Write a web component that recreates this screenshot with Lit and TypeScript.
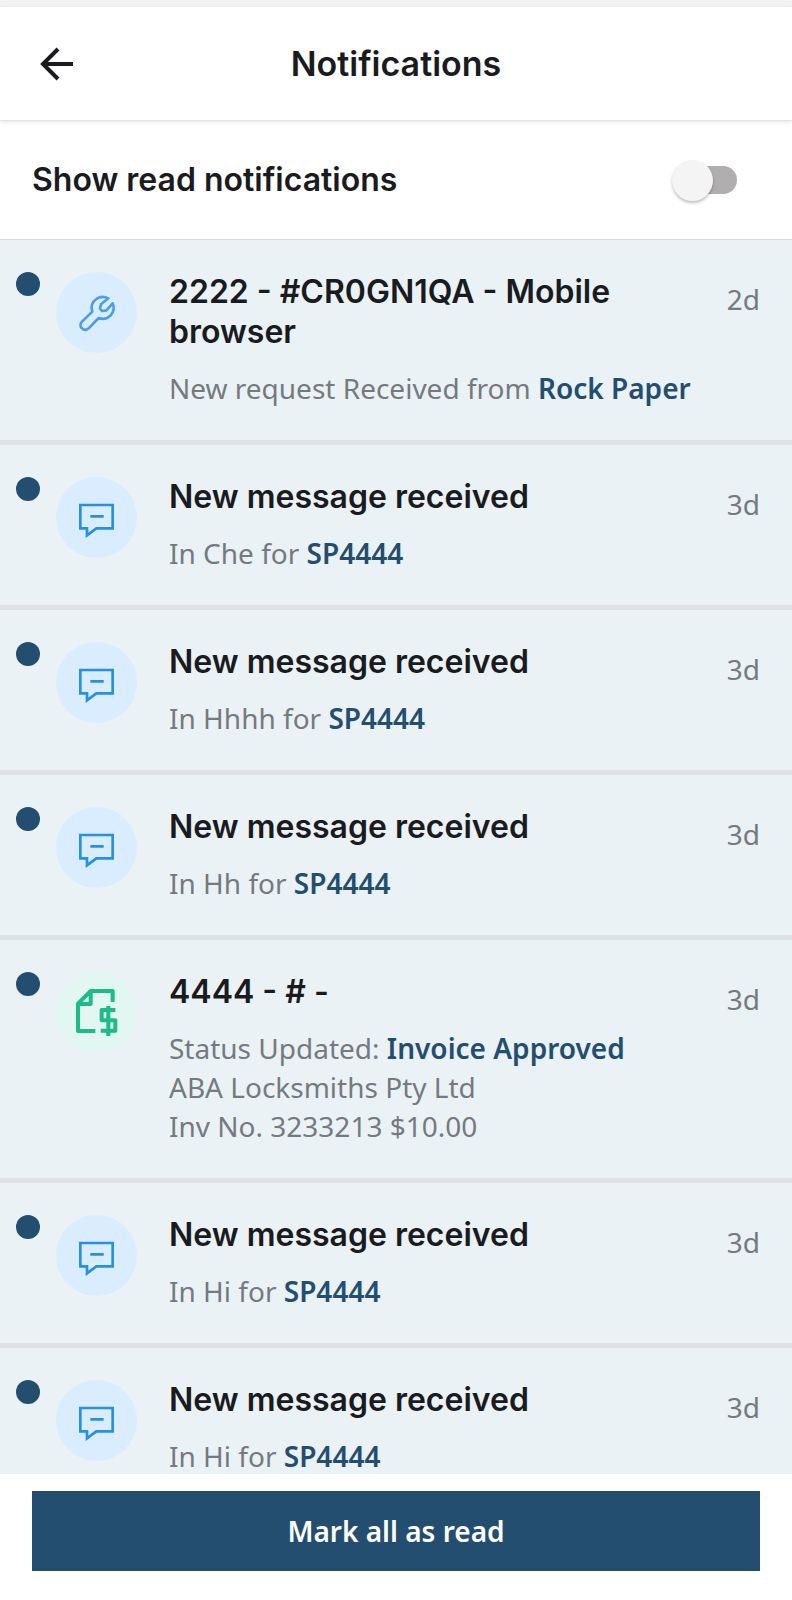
import { LitElement, html, css, svg, TemplateResult } from "lit";
import { customElement, property, state } from "lit/decorators.js";

type Kind = "request" | "message" | "invoice";

interface Notification {
  kind: Kind;
  title: string;
  lead: string;
  strong: string;
  extra?: string[];
  age: string;
}

const message = (room: string): Notification => ({
  kind: "message",
  title: "New message received",
  lead: `In ${room} for`,
  strong: "SP4444",
  age: "3d",
});

const NOTIFICATIONS: Notification[] = [
  {
    kind: "request",
    title: "2222 - #CR0GN1QA - Mobile browser",
    lead: "New request Received from",
    strong: "Rock Paper",
    age: "2d",
  },
  message("Che"),
  message("Hhhh"),
  message("Hh"),
  {
    kind: "invoice",
    title: "4444 - # -",
    lead: "Status Updated:",
    strong: "Invoice Approved",
    extra: ["ABA Locksmiths Pty Ltd", "Inv No. 3233213 $10.00"],
    age: "3d",
  },
  message("Hi"),
  message("Hi"),
];

const ICONS: Record<Kind, TemplateResult> = {
  request: html`<svg viewBox="219 143 144 144" aria-hidden="true">
    ${svg`<path d="M325 171C315 166 300 165 289 173C276 182 272 196 277 211L246 241C240 247 240 256 246 261C252 267 260 266 266 261L296 230C308 235 322 232 332 222C341 212 343 198 338 186L319 207L306 209L300 202L303 189Z"
      fill="none" stroke="#4a9fe8" stroke-width="8" stroke-linejoin="round"/>`}
  </svg>`,
  message: html`<svg viewBox="219 160 144 144" aria-hidden="true">
    ${svg`<path d="M241 193H338V263H289L261 284V263H241ZM271 227H311"
      fill="none" stroke="#2490e8" stroke-width="8"/>`}
  </svg>`,
  invoice: html`<svg viewBox="219 147 144 144" aria-hidden="true">
    ${svg`<path d="M338 186V153H272L234 191V273H286M272 153V192H234M346 210H305V241H346V272H302M325 198V288"
      fill="none" stroke="#1dbb88" stroke-width="12" stroke-linejoin="round"/>`}
  </svg>`,
};

@customElement("notification-item")
class NotificationItem extends LitElement {
  @property({ attribute: false }) item!: Notification;

  static styles = css`
    :host {
      display: flex;
      align-items: flex-start;
      padding: 32px 32px 32px 16px;
      background: #eaf2f6;
      border-bottom: 5px solid #dee2e7;
    }
    .dot {
      flex: none;
      width: 24px;
      height: 24px;
      border-radius: 50%;
      background: #234e6f;
    }
    .badge {
      flex: none;
      display: grid;
      place-items: center;
      width: 81px;
      height: 81px;
      margin: 0 32px 0 16px;
      border-radius: 50%;
      background: #d9edff;
    }
    .badge.invoice {
      background: #e2f7f2;
    }
    .badge svg {
      width: 48px;
      height: 48px;
    }
    .body {
      flex: 1;
      min-width: 0;
      display: flex;
      flex-direction: column;
      gap: 17px;
    }
    .title {
      margin: 0;
      font: 600 32px/40px Inter, sans-serif;
      color: #1a1b1f;
    }
    .text {
      margin: 0;
      font: 400 28px/39px "Noto Sans", sans-serif;
      color: #757a7f;
    }
    .strong {
      font-weight: 600;
      color: #234e6f;
    }
    .line {
      display: block;
    }
    .age {
      flex: none;
      padding-top: 8px;
      font: 400 28px/39px "Noto Sans", sans-serif;
      color: #757a7f;
    }
  `;

  render() {
    const { kind, title, lead, strong, extra = [], age } = this.item;
    return html`
      <span class="dot"></span>
      <span class="badge ${kind}">${ICONS[kind]}</span>
      <div class="body">
        <h2 class="title">${title}</h2>
        <p class="text">
          ${lead} <strong class="strong">${strong}</strong>
          ${extra.map((line) => html`<span class="line">${line}</span>`)}
        </p>
      </div>
      <time class="age">${age}</time>
    `;
  }
}

@customElement("app-root")
class AppRoot extends LitElement {
  @state() private showRead = false;

  static styles = css`
    :host {
      display: flex;
      flex-direction: column;
      height: 100vh;
      box-sizing: border-box;
      border-top: 7px solid #f2f2f2;
      background: #fff;
      font-family: Inter, sans-serif;
      color: #1a1b1f;
    }
    .header {
      flex: none;
      display: grid;
      grid-template-columns: 50px 1fr 50px;
      align-items: center;
      height: 113px;
      padding: 0 32px;
      border-bottom: 1px solid #e6e6e6;
      box-shadow: 0 1px 4px rgba(0, 0, 0, 0.1);
    }
    .back {
      display: grid;
      place-items: center;
      width: 50px;
      height: 50px;
      padding: 0;
      border: 0;
      background: none;
    }
    .heading {
      margin: 0;
      text-align: center;
      font-size: 34px;
      line-height: 40px;
      font-weight: 600;
    }
    .filter {
      flex: none;
      display: flex;
      align-items: center;
      justify-content: space-between;
      height: 119px;
      box-sizing: border-box;
      padding: 0 55px 0 32px;
      border-bottom: 1px solid #d9dcde;
      font-size: 32px;
      line-height: 40px;
      font-weight: 600;
    }
    .switch {
      appearance: none;
      display: grid;
      align-items: center;
      width: 65px;
      height: 41px;
      margin: 0;
      background: none;
    }
    .switch::before,
    .switch::after {
      content: "";
      grid-area: 1 / 1;
    }
    .switch::before {
      height: 28px;
      margin-left: 4px;
      border-radius: 14px;
      background: #b0aeaf;
    }
    .switch::after {
      width: 41px;
      height: 41px;
      border-radius: 50%;
      background: #f4f4f4;
      box-shadow: 0 2px 3px rgba(0, 0, 0, 0.25);
    }
    .switch:checked::after {
      justify-self: end;
    }
    .switch:checked::before {
      background: #7c97ab;
    }
    .list {
      flex: 1;
      min-height: 0;
      margin: 0;
      padding: 0;
      list-style: none;
      overflow-y: auto;
      scrollbar-width: none;
    }
    .footer {
      flex: none;
      padding: 17px 32px 29px;
      background: #fff;
    }
    .mark {
      display: block;
      width: 100%;
      height: 80px;
      padding: 0;
      border: 0;
      background: #234e6f;
      color: #fff;
      font: 600 28px/39px "Noto Sans", sans-serif;
    }
  `;

  private toggle(e: Event) {
    this.showRead = (e.target as HTMLInputElement).checked;
  }

  render() {
    return html`
      <header class="header">
        <button class="back" aria-label="Back">
          <svg width="34" height="34" viewBox="0 0 34 34" aria-hidden="true">
            <path d="M33 17H3M18 2L3 17L18 32" fill="none" stroke="#1a1b1f" stroke-width="4" />
          </svg>
        </button>
        <h1 class="heading">Notifications</h1>
      </header>
      <div class="filter">
        <label for="show-read">Show read notifications</label>
        <input
          id="show-read"
          class="switch"
          type="checkbox"
          .checked=${this.showRead}
          @change=${this.toggle}
        />
      </div>
      <ul class="list">
        ${NOTIFICATIONS.map(
          (item) => html`<li><notification-item .item=${item}></notification-item></li>`
        )}
      </ul>
      <footer class="footer">
        <button class="mark">Mark all as read</button>
      </footer>
    `;
  }
}
